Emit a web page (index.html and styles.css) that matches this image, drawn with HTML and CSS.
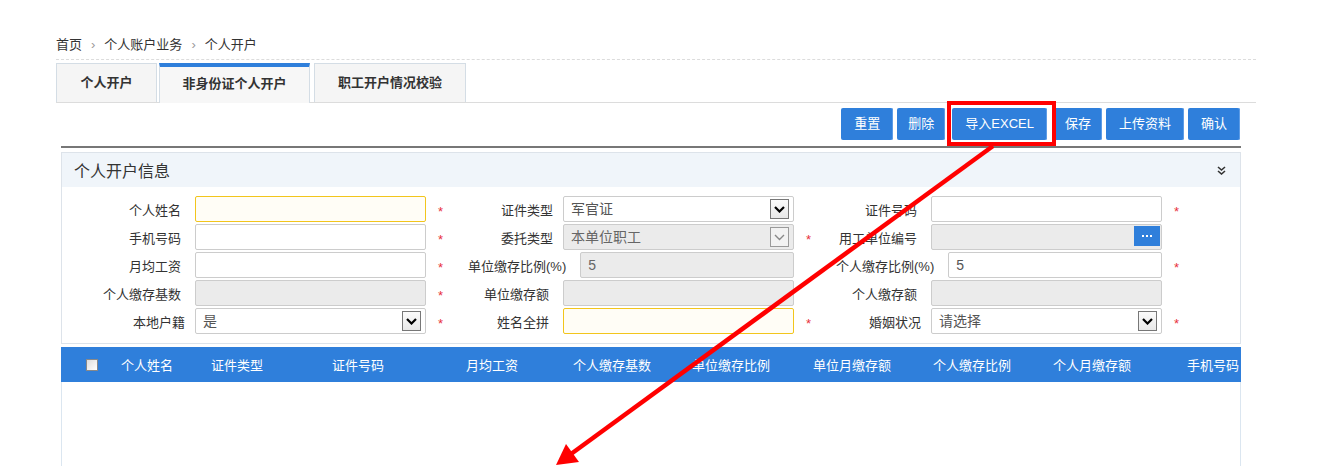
FILE: index.html
```html
<!doctype html>
<html lang="zh">
<head>
    <title>个人开户</title>
    <meta charset="utf-8">
    <link rel="stylesheet" href="styles.css">
</head>
<body>
<div class="page">
    <div class="crumb">首页<span class="sep">›</span>个人账户业务<span class="sep">›</span>个人开户</div>

    <div class="tabs">
        <div class="tab tab-a">个人开户</div>
        <div class="tab tab-b active">非身份证个人开户</div>
        <div class="tab tab-c">职工开户情况校验</div>
    </div>

    <div class="content">
        <div class="toolbar">
            <a href="#" class="btn">重置</a>
            <a href="#" class="btn narrow">删除</a>
            <a href="#" class="btn excel">导入EXCEL</a>
            <a href="#" class="btn narrow">保存</a>
            <a href="#" class="btn">上传资料</a>
            <a href="#" class="btn">确认</a>
        </div>

        <div class="panel">
            <div class="panel-head">
                <span>个人开户信息</span>
                <svg class="fold" width="9" height="9" viewBox="0 0 9 9"><polyline points="1,1 4.5,4 8,1" /><polyline points="1,5 4.5,8 8,5" /></svg>
            </div>
            <div class="form">
                <!-- row 1 -->
                <div class="field"><span class="lbl">个人姓名</span><div class="inp hl"></div><span class="req">*</span></div>
                <div class="field sel"><span class="lbl">证件类型</span><div class="inp select">军官证<span class="drop"><svg width="11" height="7" viewBox="0 0 11 7"><polyline points="1,1 5.5,5.5 10,1" /></svg></span></div><span class="req"></span></div>
                <div class="field"><span class="lbl">证件号码</span><div class="inp"></div><span class="req">*</span></div>
                <!-- row 2 -->
                <div class="field"><span class="lbl">手机号码</span><div class="inp"></div><span class="req">*</span></div>
                <div class="field sel"><span class="lbl">委托类型</span><div class="inp select off">本单位职工<span class="drop"><svg width="11" height="7" viewBox="0 0 11 7"><polyline points="1,1 5.5,5.5 10,1" /></svg></span></div><span class="req">*</span></div>
                <div class="field"><span class="lbl">用工单位编号</span><div class="inp off pick"><span class="dots"><i></i><i></i><i></i></span></div><span class="req"></span></div>
                <!-- row 3 -->
                <div class="field"><span class="lbl">月均工资</span><div class="inp"></div><span class="req">*</span></div>
                <div class="field"><span class="lbl">单位缴存比例(%)</span><div class="inp off">5</div><span class="req"></span></div>
                <div class="field"><span class="lbl">个人缴存比例(%)</span><div class="inp">5</div><span class="req">*</span></div>
                <!-- row 4 -->
                <div class="field"><span class="lbl">个人缴存基数</span><div class="inp off"></div><span class="req">*</span></div>
                <div class="field"><span class="lbl">单位缴存额</span><div class="inp off"></div><span class="req"></span></div>
                <div class="field"><span class="lbl">个人缴存额</span><div class="inp off"></div><span class="req"></span></div>
                <!-- row 5 -->
                <div class="field sel"><span class="lbl">本地户籍</span><div class="inp select">是<span class="drop"><svg width="11" height="7" viewBox="0 0 11 7"><polyline points="1,1 5.5,5.5 10,1" /></svg></span></div><span class="req">*</span></div>
                <div class="field"><span class="lbl">姓名全拼</span><div class="inp hl"></div><span class="req">*</span></div>
                <div class="field sel"><span class="lbl">婚姻状况</span><div class="inp select">请选择<span class="drop"><svg width="11" height="7" viewBox="0 0 11 7"><polyline points="1,1 5.5,5.5 10,1" /></svg></span></div><span class="req">*</span></div>
            </div>
        </div>

        <div class="grid">
            <div class="grid-head">
                <span class="chk-cell"><span class="chk"></span></span>
                <span>个人姓名</span>
                <span>证件类型</span>
                <span>证件号码</span>
                <span>月均工资</span>
                <span>个人缴存基数</span>
                <span>单位缴存比例</span>
                <span>单位月缴存额</span>
                <span>个人缴存比例</span>
                <span>个人月缴存额</span>
                <span>手机号码</span>
            </div>
            <div class="grid-body"></div>
        </div>
    </div>
</div>

<!-- red annotation drawn over the page -->
<div class="mark"></div>
<svg class="arrow" width="1333" height="466" viewBox="0 0 1333 466">
    <line x1="993" y1="146" x2="571" y2="454" />
    <polygon points="556,465 566,444 579,462" />
</svg>
</body>
</html>
```

FILE: styles.css
```css
html, body { margin: 0; padding: 0; overflow: hidden; }
body {
    font-family: "Liberation Sans", "Noto Sans CJK SC", sans-serif;
    font-size: 13px;
    color: #333;
    background: #fff;
    position: relative;
    height: 466px;
}
.page {
    width: 1200px;
    margin-left: 56px;
    padding-top: 35px;
}
.crumb {
    line-height: 20px;
    padding-bottom: 4px;
    border-bottom: 1px dashed #dcdcdc;
}
.crumb .sep {
    color: #999;
    margin: 0 9px;
}
.tabs {
    display: flex;
    margin-top: 3px;
    border-bottom: 1px solid #dcdcdc;
    height: 39px;
}
.tab {
    box-sizing: border-box;
    height: 39px;
    border: 1px solid #d4dde5;
    border-bottom: none;
    background: #f5f5f5;
    font-weight: bold;
    text-align: center;
    line-height: 38px;
}
.tab-a { width: 101px; margin-right: 2px; }
.tab-b { width: 151px; margin-right: 4px; }
.tab-c { width: 152px; }
.tab.active {
    height: 40px;
    border-top: 4px solid #2f7fdb;
    background: #f7f7f7;
    line-height: 34px;
    position: relative;
    z-index: 1;
}
.content {
    margin: 0 15px 0 5px;
}
.toolbar {
    display: flex;
    justify-content: flex-end;
    gap: 4px;
    margin-top: 5px;
    padding: 0 1px 6px 0;
    border-bottom: 2px solid #777;
}
.btn {
    display: block;
    height: 32px;
    line-height: 32px;
    padding: 0 13px;
    background: #2f7fdb;
    color: #fff;
    text-decoration: none;
    border-radius: 2px;
    box-shadow: inset -1px 0 0 #5d9ce6;
}
.btn.narrow { padding: 0 11px; }
.btn.excel { margin: 0 3px; }

.panel {
    margin-top: 4px;
    border: 1px solid #dde3ea;
}
.panel-head {
    height: 34px;
    background: #f0f5fa;
    display: flex;
    align-items: center;
    justify-content: space-between;
    padding: 0 14px 0 12px;
    font-size: 16px;
}
.fold polyline {
    fill: none;
    stroke: #333;
    stroke-width: 1.6;
}
.form {
    display: grid;
    grid-template-columns: repeat(3, 368px);
    row-gap: 2px;
    padding: 9px 0 9px 25px;
}
.field {
    display: flex;
    align-items: center;
    height: 26px;
}
.lbl {
    box-sizing: border-box;
    min-width: 94px;
    padding-left: 13px;
    margin-right: 14px;
    text-align: right;
    white-space: nowrap;
}
.sel .lbl { min-width: 98px; margin-right: 10px; }
.inp {
    flex: 1;
    box-sizing: border-box;
    height: 26px;
    border: 1px solid #ccc;
    border-radius: 2px;
    background: #fff;
    padding: 0 7px;
    line-height: 24px;
    font-size: 14px;
    color: #555;
    position: relative;
}
.inp.hl { border-color: #f2c51c; background: #fffdf6; }
.inp.off { background: #ebebeb; color: #666; }
.req {
    width: 29px;
    flex: none;
    text-align: center;
    color: #e8303a;
    font-size: 13px;
    line-height: 12px;
    padding-top: 5px;
    height: 12px;
}
.select .drop {
    position: absolute;
    top: 2px;
    right: 4px;
    box-sizing: border-box;
    width: 19px;
    height: 20px;
    border: 1px solid #777;
    background: linear-gradient(#fbfbfb, #e8e8e8);
    display: flex;
    align-items: center;
    justify-content: center;
}
.select .drop polyline {
    fill: none;
    stroke: #000;
    stroke-width: 2.2;
}
.select.off .drop { border-color: #9a9a9a; background: #f2f2f2; }
.select.off .drop polyline { stroke: #888; stroke-width: 1.4; }
.pick .dots {
    position: absolute;
    top: 1px;
    right: 1px;
    width: 26px;
    height: 20px;
    background: #2f7fdb;
    display: flex;
    align-items: center;
    justify-content: center;
    gap: 2px;
}
.pick .dots i {
    width: 2px;
    height: 2px;
    background: #fff;
}

.grid { margin-top: 3px; }
.grid-head {
    display: grid;
    grid-template-columns: 60px 90px 121px 134px 107px 119px 121px 120px 120px 134px 1fr;
    height: 35px;
    align-items: center;
    background: #2f7fdb;
    color: #fff;
    white-space: nowrap;
    overflow: hidden;
}
.chk-cell {
    display: flex;
    justify-content: center;
    padding-left: 2px;
}
.chk {
    width: 10px;
    height: 10px;
    border: 1px solid #888;
    background: linear-gradient(135deg, #ddd, #fff);
}
.grid-body {
    height: 84px;
    background: #fff;
    border-left: 1px solid #dbe6f0;
    border-right: 1px solid #dbe6f0;
}

.mark {
    position: absolute;
    left: 947px;
    top: 101px;
    width: 101px;
    height: 37px;
    border: 4px solid #f00;
}
.arrow {
    position: absolute;
    left: 0;
    top: 0;
}
.arrow line {
    stroke: #f00;
    stroke-width: 4.5;
}
.arrow polygon { fill: #f00; }
```
